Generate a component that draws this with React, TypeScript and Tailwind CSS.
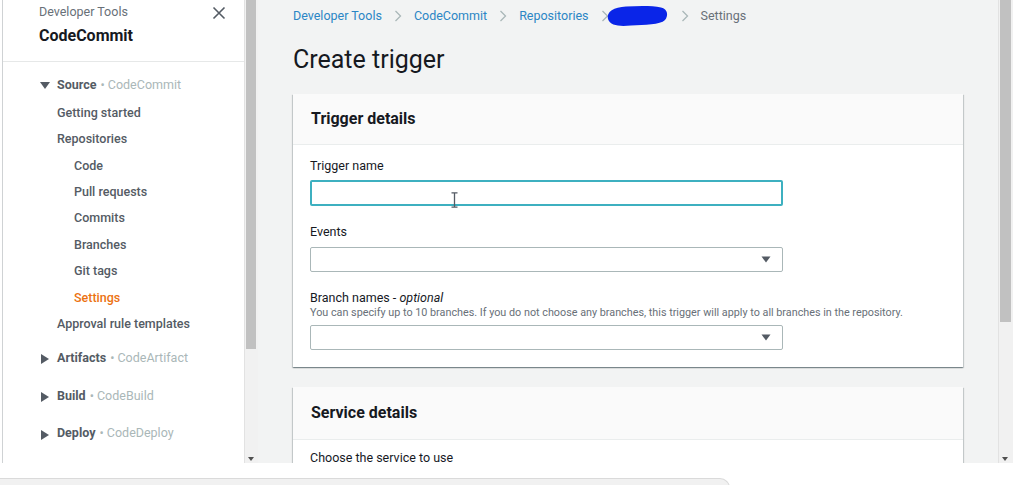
import React from "react";

const font = { fontFamily: "Roboto, 'Noto Sans', Arial, sans-serif" };

function Caret() {
  return (
    <svg width="10" height="7" viewBox="0 0 10 7" className="block">
      <path d="M0.5 0.5 L9.5 0.5 L5 6.5 Z" fill="#545b64" />
    </svg>
  );
}

function Chevron() {
  return (
    <svg width="8" height="12" viewBox="0 0 8 12" className="block">
      <path d="M1.5 1 L6.5 6 L1.5 11" fill="none" stroke="#aab7b8" strokeWidth="1.3" />
    </svg>
  );
}

function TriDown() {
  return (
    <svg width="10" height="8" viewBox="0 0 10 8" className="block">
      <path d="M0 1 L10 1 L5 8 Z" fill="#545b64" />
    </svg>
  );
}

function TriRight() {
  return (
    <svg width="8" height="10" viewBox="0 0 8 10" className="block">
      <path d="M0 0 L8 5 L0 10 Z" fill="#545b64" />
    </svg>
  );
}

function Sidebar() {
  const sub = ["Code", "Pull requests", "Commits", "Branches", "Git tags"];
  return (
    <div className="w-[242px] ml-[2px] h-full bg-white border-l border-[#cfd2d4] flex flex-col text-[#545b64]">
      <div className="h-[62px] border-b border-[#e6e8e8] relative pl-[36px] pt-[4px]">
        <div className="text-[12.5px] leading-[16px] text-[#687078]">Developer Tools</div>
        <div className="text-[16px] leading-[20px] font-bold text-[#16191f] mt-[6px]">CodeCommit</div>
        <svg className="absolute left-[209px] top-[6px]" width="14" height="14" viewBox="0 0 14 14">
          <path d="M1.5 1.5 L12.5 12.5 M12.5 1.5 L1.5 12.5" stroke="#545b64" strokeWidth="1.6" />
        </svg>
      </div>
      <div className="pt-[10px] text-[12.5px]">
        <div className="h-[26px] flex items-center pl-[37px]">
          <div className="w-[17px]"><TriDown /></div>
          <span className="font-bold text-[#545b64]">Source</span>
          <span className="text-[#aab7b8] ml-[4px]">• CodeCommit</span>
        </div>
        <div className="pt-[2px] font-medium">
          <div className="h-[26.4px] flex items-center pl-[54px]">Getting started</div>
          <div className="h-[26.4px] flex items-center pl-[54px]">Repositories</div>
          {sub.map((s) => (
            <div key={s} className="h-[26.4px] flex items-center pl-[71px]">{s}</div>
          ))}
          <div className="h-[26.4px] flex items-center pl-[71px] text-[#ec7211]">Settings</div>
          <div className="h-[26.4px] flex items-center pl-[54px]">Approval rule templates</div>
        </div>
        <div className="pt-[2px]">
          {[
            ["Artifacts", "CodeArtifact"],
            ["Build", "CodeBuild"],
            ["Deploy", "CodeDeploy"],
          ].map(([a, b]) => (
            <div key={a} className="h-[37.6px] flex items-center pl-[38px]">
              <div className="w-[16px] pt-[2px]"><TriRight /></div>
              <span className="font-bold">{a}</span>
              <span className="text-[#aab7b8] ml-[4px]">• {b}</span>
            </div>
          ))}
        </div>
      </div>
    </div>
  );
}

function ScrollBar({ thumb, wide }: { thumb: number; wide?: boolean }) {
  return (
    <div className={`h-full relative bg-[#f1f1f1] border-l border-[#e2e2e2] ${wide ? "w-[15px]" : "w-[14px]"}`}>
      <div className="absolute left-[1px] right-[2px] top-0 bg-[#c1c1c1]" style={{ height: thumb }} />
      <svg className="absolute left-[3px] bottom-[2px]" width="6" height="4" viewBox="0 0 6 4">
        <path d="M0 0 L6 0 L3 4 Z" fill="#505050" />
      </svg>
    </div>
  );
}

function Select() {
  return (
    <div className="w-[473px] h-[25px] bg-white border border-[#aab7b8] rounded-[2px] flex items-center justify-end pr-[11px]">
      <Caret />
    </div>
  );
}

const cardShadow =
  "shadow-[0_1px_1px_0_rgba(0,28,36,0.3),1px_1px_1px_0_rgba(0,28,36,0.15),-1px_1px_1px_0_rgba(0,28,36,0.15)]";

function Main() {
  return (
    <div className="flex-1 h-full bg-[#f2f3f3] overflow-hidden pl-[35px] text-[#16191f]">
      <div className="h-[32px] flex items-center text-[12.5px]">
        <span className="text-[#2b86c5]">Developer Tools</span>
        <span className="mx-[12px]"><Chevron /></span>
        <span className="text-[#2b86c5]">CodeCommit</span>
        <span className="mx-[12px]"><Chevron /></span>
        <span className="text-[#2b86c5]">Repositories</span>
        <span className="ml-[12px]"><Chevron /></span>
        <svg width="64" height="24" viewBox="0 0 64 24" className="block ml-[-4px] mt-[-1px]">
          <path d="M3 15 C1 8 9 3 21 2.5 C33 2 47 1.5 56 3.5 C63 5 63.5 12 60 16 C55 21 40 20.5 26 21.5 C15 22.5 5 22 3 15 Z" fill="#0a25e8" />
        </svg>
        <span className="mx-[12px]"><Chevron /></span>
        <span className="text-[#687078]">Settings</span>
      </div>
      <div className="mt-[12px] h-[32px] leading-[32px] text-[25px] text-[#16191f]">Create trigger</div>

      <div className={`mt-[18px] w-[670px] bg-white ${cardShadow}`}>
        <div className="h-[51px] bg-[#fafafa] border-b border-[#eaeded] flex items-center pl-[18px]">
          <span className="text-[16px] font-bold">Trigger details</span>
        </div>
        <div className="pl-[17px] pt-[12px] pb-[17px] text-[12.5px]">
          <div className="h-[18px] leading-[18px]">Trigger name</div>
          <div className="relative mt-[5px] w-[473px] h-[26px] bg-white border-2 border-[#3db0c0] rounded-[2px]">
            <svg className="absolute left-[139px] top-[10px]" width="7" height="16" viewBox="0 0 7 16">
              <path d="M0.5 0.8 L6.5 0.8 M3.5 0.8 L3.5 15.2 M0.5 15.2 L6.5 15.2" stroke="#545b64" strokeWidth="1.3" fill="none" />
            </svg>
          </div>
          <div className="mt-[17px] h-[18px] leading-[18px]">Events</div>
          <div className="mt-[6px]"><Select /></div>
          <div className="mt-[17px] h-[18px] leading-[18px]">
            Branch names - <i>optional</i>
          </div>
          <div className="h-[12px] leading-[12px] text-[10.8px] text-[#687078] whitespace-nowrap">
            You can specify up to 10 branches. If you do not choose any branches, this trigger will apply to all branches in the repository.
          </div>
          <div className="mt-[6px]"><Select /></div>
        </div>
      </div>

      <div className={`mt-[20px] w-[670px] bg-white ${cardShadow}`}>
        <div className="h-[53px] bg-[#fafafa] border-b border-[#eaeded] flex items-center pl-[18px]">
          <span className="text-[16px] font-bold">Service details</span>
        </div>
        <div className="pl-[17px] pt-[10px] pb-[20px] text-[12.5px]">
          <div className="h-[16px] leading-[16px]">Choose the service to use</div>
        </div>
      </div>
    </div>
  );
}

export default function App() {
  return (
    <div className="w-[1024px] h-[485px] bg-white overflow-hidden flex flex-col" style={font}>
      <div className="h-[463px] flex">
        <Sidebar />
        <ScrollBar thumb={349} />
        <Main />
        <ScrollBar thumb={322} wide />
        <div className="w-[11px] h-full bg-white" />
      </div>
      <div className="flex-1 bg-white pt-[15px]">
        <div className="w-[730px] h-[10px] bg-[#f1f1f1] border-t border-r border-[#dadada] rounded-tr-[12px]" />
      </div>
    </div>
  );
}
